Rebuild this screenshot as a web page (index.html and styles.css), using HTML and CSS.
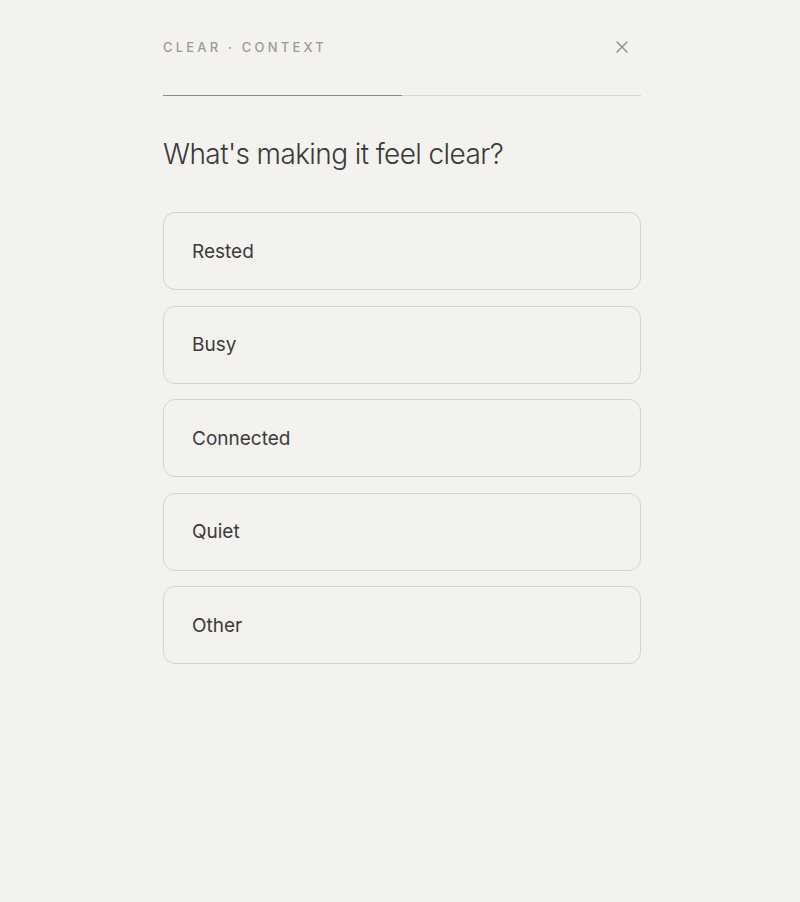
FILE: index.html
```html
<!DOCTYPE html>
<html lang="en">
<head>
    <meta charset="UTF-8">
    <meta name="viewport" content="width=device-width, initial-scale=1.0">
    <title>Clear · Context</title>
    <link rel="stylesheet" href="styles.css">
</head>
<body>
    <div class="container">
        <div class="header">
            <span class="label">Clear · Context</span>
            <button class="close" aria-label="Close">
                <svg width="14" height="14" viewBox="0 0 14 14">
                    <path d="M2 2L12 12M12 2L2 12" stroke="#8d8b86" stroke-width="1.4" stroke-linecap="round" fill="none"/>
                </svg>
            </button>
        </div>

        <div class="progress">
            <div class="progress-fill" style="width: 50%"></div>
        </div>

        <h1 class="question">What's making it feel clear?</h1>

        <div class="options">
            <button class="option">Rested</button>
            <button class="option">Busy</button>
            <button class="option">Connected</button>
            <button class="option">Quiet</button>
            <button class="option">Other</button>
        </div>
    </div>
</body>
</html>
```

FILE: styles.css
```css
body {
    margin: 0;
    padding: 0 0 0 4px;
    background-color: #f3f2ef;
    font-family: Inter, "Noto Sans", sans-serif;
    color: #3b3a38;
}
.container {
    width: 478px;
    margin: 0 auto;
    padding-top: 37px;
}
.header {
    display: flex;
    align-items: center;
    justify-content: space-between;
    height: 20px;
}
.label {
    font-size: 13px;
    font-weight: 500;
    letter-spacing: 3.2px;
    text-transform: uppercase;
    color: #9c9a94;
}
.close {
    background: none;
    border: none;
    padding: 0;
    margin-right: 12px;
    width: 14px;
    height: 14px;
    cursor: pointer;
    display: flex;
}
.progress {
    margin-top: 38px;
    height: 1px;
    background-color: #d9d6cf;
}
.progress-fill {
    height: 1px;
    background-color: #8e8c87;
}
.question {
    margin: 40px 0 40px;
    font-size: 28px;
    font-weight: 300;
    letter-spacing: -0.6px;
    line-height: 36px;
    color: #3a3a38;
}
.options {
    display: flex;
    flex-direction: column;
    gap: 15.5px;
}
.option {
    height: 78px;
    text-align: left;
    padding: 0 28px;
    background-color: transparent;
    border: 1px solid #d6d3cd;
    border-radius: 12px;
    font-family: Inter, "Noto Sans", sans-serif;
    font-size: 19px;
    color: #3c3b39;
    cursor: pointer;
}
```
